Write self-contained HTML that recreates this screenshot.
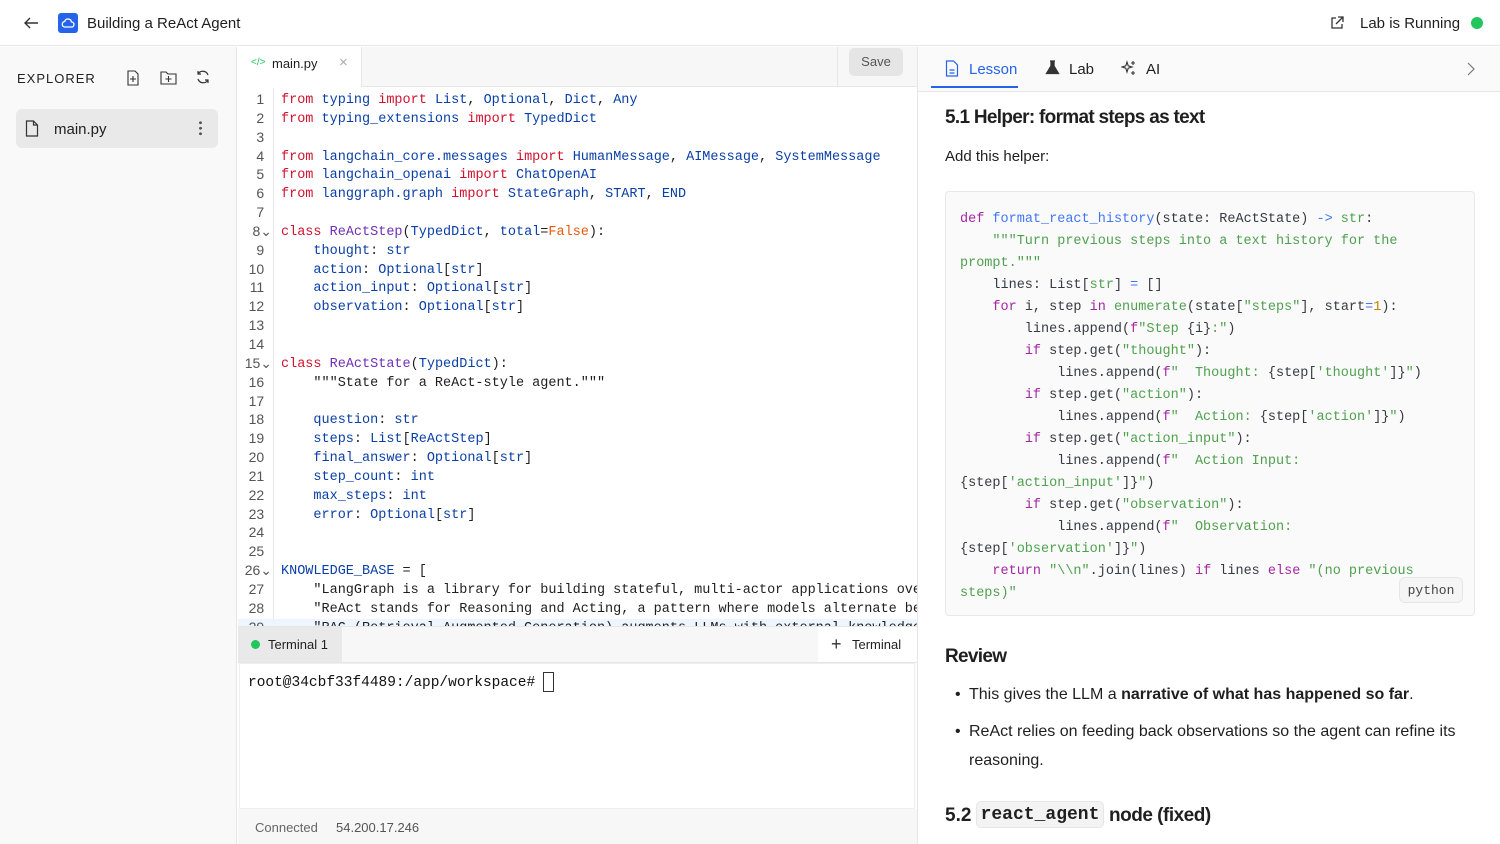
<!DOCTYPE html>
<html><head><meta charset="utf-8"><style>
*{box-sizing:border-box;margin:0;padding:0}
body{width:1500px;height:844px;overflow:hidden;background:#fff;font-family:"Liberation Sans",sans-serif;color:#1f1f1f;position:relative}
.abs{position:absolute}
.mono{font-family:"Liberation Mono",monospace}
.k{color:#d0122f}.n{color:#0a3fa8}.c{color:#6f2fb8}.o{color:#e8590c}.s{color:#1f1f1f}
.rk{color:#a626a4}.rf{color:#4078f2}.rs{color:#50a14f}.rn{color:#c18401}.ro{color:#4078f2}
pre{font-family:"Liberation Mono",monospace;font-size:13.5px}
</style></head><body>
<!-- header -->
<div class="abs" style="left:0;top:0;width:1500px;height:46px;border-bottom:1px solid #e6e6e6;background:#fff"></div>
<svg class="abs" style="left:22px;top:14px" width="18" height="18" viewBox="0 0 18 18"><path d="M16 9H3M8 4L3 9l5 5" stroke="#333" stroke-width="1.4" fill="none"/></svg>
<div class="abs" style="left:58px;top:13px;width:20px;height:20px;background:#2563eb;border-radius:3px"></div>
<svg class="abs" style="left:60px;top:15px" width="16" height="16" viewBox="0 0 16 16"><path d="M4.5 12h7a2.5 2.5 0 0 0 0-5 3.5 3.5 0 0 0-6.8-.5A2.8 2.8 0 0 0 4.5 12z" stroke="#fff" stroke-width="1.3" fill="none"/></svg>
<div class="abs" style="left:87px;top:15px;font-size:15px">Building a ReAct Agent</div>
<svg class="abs" style="left:1329px;top:15px" width="16" height="16" viewBox="0 0 16 16"><path d="M7 3H3v10h10V9M9 2h5v5M14 2L7 9" stroke="#333" stroke-width="1.3" fill="none"/></svg>
<div class="abs" style="left:1360px;top:15px;font-size:15px">Lab is Running</div>
<div class="abs" style="left:1471px;top:17px;width:12px;height:12px;border-radius:50%;background:#22c55e"></div>

<!-- sidebar -->
<div class="abs" style="left:0;top:47px;width:237px;height:797px;background:#f9f9f9;border-right:1px solid #e6e6e6"></div>
<div class="abs" style="left:17px;top:71px;font-size:13px;letter-spacing:1px;color:#222">EXPLORER</div>
<svg class="abs" style="left:126px;top:70px" width="14" height="16" viewBox="0 0 14 16"><path d="M2 1h7l3 3v11H2z M7 6v6M4 9h6" stroke="#333" stroke-width="1.1" fill="none"/></svg>
<svg class="abs" style="left:160px;top:70px" width="17" height="15" viewBox="0 0 17 15"><path d="M1 2h5l2 2h8v10H1z M8.5 6v6M5.5 9h6" stroke="#333" stroke-width="1.1" fill="none"/></svg>
<svg class="abs" style="left:195px;top:69px" width="16" height="16" viewBox="0 0 16 16"><path d="M13 6a5.5 5.5 0 0 0-10-1M3 10a5.5 5.5 0 0 0 10 1M3 2v3h3M13 14v-3h-3" stroke="#333" stroke-width="1.2" fill="none"/></svg>
<div class="abs" style="left:16px;top:109px;width:202px;height:39px;background:#e9e9e9;border-radius:6px"></div>
<svg class="abs" style="left:25px;top:120px" width="14" height="17" viewBox="0 0 14 17"><path d="M1.5 1h7l4 4v11h-11z M8.5 1v4h4" stroke="#333" stroke-width="1.2" fill="none"/></svg>
<div class="abs" style="left:54px;top:121px;font-size:15px">main.py</div>
<div class="abs" style="left:199px;top:120px;width:3px;height:16px;background:radial-gradient(circle,#555 1.3px,transparent 1.6px) 0 0/3px 5.5px"></div>

<!-- editor tab bar -->
<div class="abs" style="left:238px;top:47px;width:679px;height:40px;background:#f7f7f7;border-bottom:1px solid #e6e6e6"></div>
<div class="abs" style="left:238px;top:47px;width:124px;height:40px;background:#fff;border-right:1px solid #e6e6e6"></div>
<div class="abs" style="left:251px;top:57px;font-size:10px;color:#22c55e" >&lt;/&gt;</div>
<div class="abs" style="left:272px;top:56px;font-size:13px">main.py</div>
<div class="abs" style="left:339px;top:54px;font-size:15px;color:#aaa">×</div>
<div class="abs" style="left:837px;top:47px;width:1px;height:40px;background:#e6e6e6"></div>
<div class="abs" style="left:849px;top:48px;width:54px;height:28px;background:#e5e5e5;border-radius:5px;font-size:13px;color:#555;text-align:center;line-height:28px">Save</div>

<!-- editor code -->
<div class="abs" style="left:273px;top:88px;width:1px;height:538px;background:#e6e6e6"></div>
<div class="abs" style="left:238px;top:619px;width:679px;height:8px;background:#eef5ff"></div>
<pre class="abs" style="left:238px;top:90px;width:34px;line-height:18.85px;color:#555;text-align:right;padding-right:0;font-family:'Liberation Sans',sans-serif;font-size:14px;overflow:hidden;height:537px">1  
2  
3  
4  
5  
6  
7  
8⌄
9  
10  
11  
12  
13  
14  
15⌄
16  
17  
18  
19  
20  
21  
22  
23  
24  
25  
26⌄
27  
28  
29  </pre>
<pre class="abs" style="left:281px;top:92px;width:636px;height:535px;overflow:hidden;line-height:18.85px;color:#1f1f1f"><span class="k">from</span> <span class="n">typing</span> <span class="k">import</span> <span class="n">List</span>, <span class="n">Optional</span>, <span class="n">Dict</span>, <span class="n">Any</span>
<span class="k">from</span> <span class="n">typing_extensions</span> <span class="k">import</span> <span class="n">TypedDict</span>

<span class="k">from</span> <span class="n">langchain_core.messages</span> <span class="k">import</span> <span class="n">HumanMessage</span>, <span class="n">AIMessage</span>, <span class="n">SystemMessage</span>
<span class="k">from</span> <span class="n">langchain_openai</span> <span class="k">import</span> <span class="n">ChatOpenAI</span>
<span class="k">from</span> <span class="n">langgraph.graph</span> <span class="k">import</span> <span class="n">StateGraph</span>, <span class="n">START</span>, <span class="n">END</span>

<span class="k">class</span> <span class="c">ReActStep</span>(<span class="n">TypedDict</span>, <span class="n">total</span>=<span class="o">False</span>):
    <span class="n">thought</span>: <span class="n">str</span>
    <span class="n">action</span>: <span class="n">Optional</span>[<span class="n">str</span>]
    <span class="n">action_input</span>: <span class="n">Optional</span>[<span class="n">str</span>]
    <span class="n">observation</span>: <span class="n">Optional</span>[<span class="n">str</span>]


<span class="k">class</span> <span class="c">ReActState</span>(<span class="n">TypedDict</span>):
    """State for a ReAct-style agent."""

    <span class="n">question</span>: <span class="n">str</span>
    <span class="n">steps</span>: <span class="n">List</span>[<span class="n">ReActStep</span>]
    <span class="n">final_answer</span>: <span class="n">Optional</span>[<span class="n">str</span>]
    <span class="n">step_count</span>: <span class="n">int</span>
    <span class="n">max_steps</span>: <span class="n">int</span>
    <span class="n">error</span>: <span class="n">Optional</span>[<span class="n">str</span>]


<span class="n">KNOWLEDGE_BASE</span> = [
    "LangGraph is a library for building stateful, multi-actor applications over
    "ReAct stands for Reasoning and Acting, a pattern where models alternate between
    "RAG (Retrieval-Augmented Generation) augments LLMs with external knowledge</pre>

<!-- terminal -->
<div class="abs" style="left:238px;top:626px;width:679px;height:37px;background:#f7f7f7;border-top:1px solid #e6e6e6;border-bottom:1px solid #e6e6e6"></div>
<div class="abs" style="left:238px;top:627px;width:104px;height:35px;background:#e9e9e9"></div>
<div class="abs" style="left:251px;top:640px;width:9px;height:9px;border-radius:50%;background:#22c55e"></div>
<div class="abs" style="left:268px;top:637px;font-size:13px">Terminal 1</div>
<div class="abs" style="left:818px;top:627px;width:99px;height:35px;background:#fff"></div>
<div class="abs" style="left:831px;top:634px;font-size:18px;font-weight:300;color:#333">+</div>
<div class="abs" style="left:852px;top:637px;font-size:13px">Terminal</div>
<div class="abs" style="left:239px;top:663px;width:676px;height:146px;background:#fff;border:1px solid #eee"></div>
<div class="abs mono" style="left:248px;top:675px;font-size:14.5px;color:#111">root@34cbf33f4489:/app/workspace# </div>
<div class="abs" style="left:543px;top:672px;width:11px;height:20px;border:1px solid #333"></div>
<div class="abs" style="left:238px;top:809px;width:679px;height:35px;background:#f7f7f7"></div>
<div class="abs" style="left:255px;top:820px;font-size:13px;color:#666">Connected</div>
<div class="abs" style="left:336px;top:820px;font-size:13px;color:#555">54.200.17.246</div>

<!-- right panel -->
<div class="abs" style="left:917px;top:47px;width:1px;height:797px;background:#e6e6e6"></div>
<div class="abs" style="left:918px;top:47px;width:582px;height:45px;background:#fafafa;border-bottom:1px solid #e6e6e6"></div>
<div class="abs" style="left:931px;top:86px;width:87px;height:2px;background:#2563eb"></div>
<svg class="abs" style="left:945px;top:60px" width="14" height="17" viewBox="0 0 14 17"><path d="M1.5 1h7l4 4v11h-11z M4.5 10h5M4.5 13h5" stroke="#2563eb" stroke-width="1.2" fill="none"/></svg>
<div class="abs" style="left:969px;top:61px;font-size:15px;color:#2563eb">Lesson</div>
<svg class="abs" style="left:1045px;top:60px" width="15" height="15" viewBox="0 0 15 15"><path d="M5 1h5M6 1v5L1.5 13.5h12L9 6V1" stroke="#333" stroke-width="1.3" fill="#333"/></svg>
<div class="abs" style="left:1069px;top:61px;font-size:15px">Lab</div>
<svg class="abs" style="left:1121px;top:60px" width="16" height="16" viewBox="0 0 16 16"><path d="M6 2l1.2 3.8L11 7 7.2 8.2 6 12 4.8 8.2 1 7l3.8-1.2zM12 1v4M10 3h4M12 11v4M10 13h4" stroke="#333" stroke-width="1.1" fill="none"/></svg>
<div class="abs" style="left:1146px;top:61px;font-size:15px">AI</div>
<svg class="abs" style="left:1466px;top:62px" width="10" height="14" viewBox="0 0 10 14"><path d="M2 1l6 6-6 6" stroke="#777" stroke-width="1.2" fill="none"/></svg>

<div class="abs" style="left:945px;top:107px;font-size:19px;font-weight:bold;letter-spacing:-0.7px">5.1 Helper: format steps as text</div>
<div class="abs" style="left:945px;top:148px;font-size:15px">Add this helper:</div>
<div class="abs" style="left:945px;top:191px;width:530px;height:425px;background:#fafafa;border:1px solid #e8e8e8;border-radius:4px"></div>
<pre class="abs" style="left:960px;top:209px;line-height:22px;color:#383a42"><span class="rk">def</span> <span class="rf">format_react_history</span>(state: ReActState) <span class="ro">-&gt;</span> <span class="rs">str</span>:
    <span class="rs">"""Turn previous steps into a text history for the</span>
<span class="rs">prompt."""</span>
    lines: List[<span class="rs">str</span>] <span class="ro">=</span> []
    <span class="rk">for</span> i, step <span class="rk">in</span> <span class="rs">enumerate</span>(state[<span class="rs">"steps"</span>], start<span class="ro">=</span><span class="rn">1</span>):
        lines.append(<span class="rk">f</span><span class="rs">"Step </span>{i}<span class="rs">:"</span>)
        <span class="rk">if</span> step.get(<span class="rs">"thought"</span>):
            lines.append(<span class="rk">f</span><span class="rs">"  Thought: </span>{step[<span class="rs">'thought'</span>]}<span class="rs">"</span>)
        <span class="rk">if</span> step.get(<span class="rs">"action"</span>):
            lines.append(<span class="rk">f</span><span class="rs">"  Action: </span>{step[<span class="rs">'action'</span>]}<span class="rs">"</span>)
        <span class="rk">if</span> step.get(<span class="rs">"action_input"</span>):
            lines.append(<span class="rk">f</span><span class="rs">"  Action Input: </span>
{step[<span class="rs">'action_input'</span>]}<span class="rs">"</span>)
        <span class="rk">if</span> step.get(<span class="rs">"observation"</span>):
            lines.append(<span class="rk">f</span><span class="rs">"  Observation: </span>
{step[<span class="rs">'observation'</span>]}<span class="rs">"</span>)
    <span class="rk">return</span> <span class="rs">"\\n"</span>.join(lines) <span class="rk">if</span> lines <span class="rk">else</span> <span class="rs">"(no previous</span>
<span class="rs">steps)"</span></pre>
<div class="abs mono" style="left:1399px;top:577px;width:64px;height:26px;border:1px solid #e6e6e6;border-radius:6px;background:#f5f5f5;font-size:13px;color:#444;text-align:center;line-height:25px">python</div>

<div class="abs" style="left:945px;top:646px;font-size:19px;font-weight:bold;letter-spacing:-0.7px">Review</div>
<div class="abs" style="left:955px;top:686px;font-size:16px">•</div>
<div class="abs" style="left:969px;top:686px;font-size:16px">This gives the LLM a <b>narrative of what has happened so far</b>.</div>
<div class="abs" style="left:955px;top:723px;font-size:16px">•</div>
<div class="abs" style="left:969px;top:717px;width:510px;font-size:16px;line-height:29px">ReAct relies on feeding back observations so the agent can refine its reasoning.</div>
<div class="abs" style="left:945px;top:805px;font-size:19px;font-weight:bold">5.2</div>
<div class="abs mono" style="left:976px;top:801px;width:128px;height:27px;background:#f3f3f3;border:1px solid #e6e6e6;border-radius:5px;font-size:18px;font-weight:bold;text-align:center;line-height:26px">react_agent</div>
<div class="abs" style="left:1109px;top:805px;font-size:19px;font-weight:bold;letter-spacing:-0.5px">node (fixed)</div>
</body></html>
